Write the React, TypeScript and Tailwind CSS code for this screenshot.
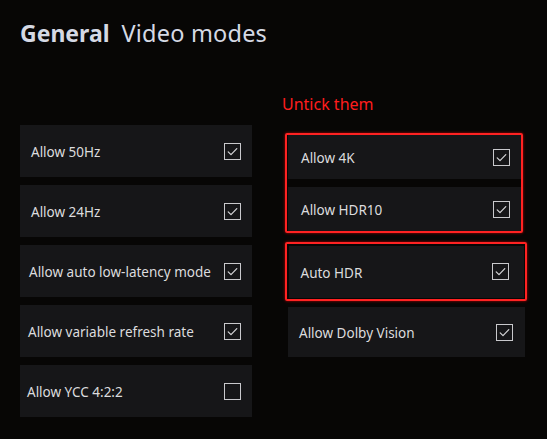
import React from "react";

function Check({ checked }: { checked: boolean }) {
  return (
    <div className="w-[17px] h-[17px] border-[1.5px] border-[#c9c9cc] flex items-center justify-center shrink-0">
      {checked && (
        <svg width="13" height="13" viewBox="0 0 13 13" fill="none">
          <path d="M2.2 6.8 L5 9.6 L10.8 3.6" stroke="#d6d6d8" strokeWidth="1.2" strokeLinecap="round" strokeLinejoin="round" />
        </svg>
      )}
    </div>
  );
}

function Tile({ label, checked = true, h = "h-[52px]", pl = "pl-[11px]", pr = "pr-[11px]" }: { label: string; checked?: boolean; h?: string; pl?: string; pr?: string }) {
  return (
    <div className={`${h} ${pl} ${pr} bg-[#161618] flex items-center justify-between`}>
      <span className="text-[13.5px] leading-[18px] pt-[2px] text-[#dcdcde]">{label}</span>
      <Check checked={checked} />
    </div>
  );
}

export default function App() {
  return (
    <div
      className="w-[547px] h-[439px] bg-[#070605] overflow-hidden pl-[20px] pt-[18px]"
      style={{ fontFamily: '"Noto Sans", "Open Sans", sans-serif' }}
    >
      <div className="flex items-baseline gap-[12px] text-[23px] leading-[30px] text-[#d5d9e4]">
        <span className="font-bold">General</span>
        <span className="text-[23.5px] tracking-[0.2px]">Video modes</span>
      </div>
      <div className="flex gap-[33px]">
        <div className="w-[232px] pt-[77px] flex flex-col gap-[8px]">
          <Tile label="Allow 50Hz" />
          <Tile label="Allow 24Hz" />
          <Tile label="Allow auto low-latency mode" pl="pl-[9px]" />
          <Tile label="Allow variable refresh rate" pl="pl-[8px]" />
          <Tile label="Allow YCC 4:2:2" checked={false} pl="pl-[7px]" />
        </div>
        <div className="w-[242px] pt-[46px] flex flex-col">
          <div className="ml-[-3px] text-[16px] leading-[20px] text-[#ff1d1d] mb-[19px]">Untick them</div>
          <div className="w-[238px] border-[2.5px] border-[#ff2222] rounded-[2px] pl-[1px] pr-0 flex flex-col gap-[8px] shadow-[0_0_3px_#ff0000aa]">
            <Tile label="Allow 4K" h="h-[44px]" pl="pl-[13px]" pr="pr-[11px]" />
            <Tile label="Allow HDR10" h="h-[44px]" pl="pl-[13px]" pr="pr-[11px]" />
          </div>
          <div className="mt-[9px] w-[242px] border-[2.5px] border-[#ff2222] rounded-[2px] p-[1.5px] shadow-[0_0_3px_#ff0000aa]">
            <Tile label="Auto HDR" h="h-[52px]" pl="pl-[12px]" pr="pr-[15px]" />
          </div>
          <div className="mt-[6px] ml-[3px] w-[237px]">
            <Tile label="Allow Dolby Vision" h="h-[50px]" pl="pl-[11px]" pr="pr-[12px]" />
          </div>
        </div>
      </div>
    </div>
  );
}
